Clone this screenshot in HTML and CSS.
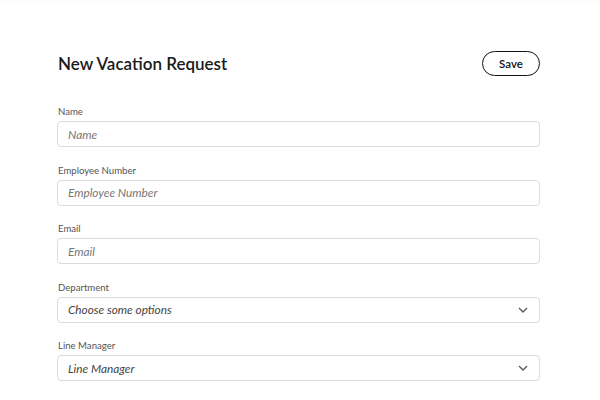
FILE: index.html
```html
<!DOCTYPE html>
<html lang="en">
<head>
<meta charset="utf-8">
<title>New Vacation Request</title>
<link rel="stylesheet" href="styles.css">
</head>
<body>
<div class="topbar"></div>
<main class="page">
  <header class="header">
    <h1 class="title">New Vacation Request</h1>
    <button class="save" type="button">Save</button>
  </header>
  <form class="form">
    <div class="field">
      <label class="label">Name</label>
      <input class="input" type="text" placeholder="Name">
    </div>
    <div class="field">
      <label class="label">Employee Number</label>
      <input class="input" type="text" placeholder="Employee Number">
    </div>
    <div class="field">
      <label class="label">Email</label>
      <input class="input" type="text" placeholder="Email">
    </div>
    <div class="field">
      <label class="label">Department</label>
      <div class="input select">
        <span class="placeholder">Choose some options</span>
        <svg class="chevron" width="10" height="6" viewBox="0 0 10 6"><path d="M1 1l4 4 4-4" fill="none" stroke="#555" stroke-width="1.3"/></svg>
      </div>
    </div>
    <div class="field">
      <label class="label">Line Manager</label>
      <div class="input select">
        <span class="placeholder">Line Manager</span>
        <svg class="chevron" width="10" height="6" viewBox="0 0 10 6"><path d="M1 1l4 4 4-4" fill="none" stroke="#555" stroke-width="1.3"/></svg>
      </div>
    </div>
    <div class="row">
      <div class="field">
        <label class="label">Start date</label>
      </div>
      <div class="field">
        <label class="label">End date</label>
      </div>
    </div>
  </form>
</main>
</body>
</html>
```
FILE: styles.css
```css
* { box-sizing: border-box; }
html, body { margin: 0; padding: 0; background: #fff; }
body {
  font-family: "Lato", "Open Sans", sans-serif;
  color: #222;
  overflow: hidden;
  height: 400px;
}
.topbar {
  height: 0;
  box-shadow: 0 0 5px 1px rgba(0, 0, 0, 0.06);
}
.page {
  padding: 50px 60px 0 57px;
}
.header {
  display: flex;
  justify-content: space-between;
  align-items: center;
  height: 26px;
  margin-bottom: 29px;
}
.title {
  margin: 0 0 0 1px;
  font-size: 17px;
  font-weight: 600;
  color: #1a1a1a;
}
.save {
  width: 58px;
  height: 25px;
  border: 1.5px solid #111;
  border-radius: 13px;
  background: #fff;
  font-family: inherit;
  font-size: 11.5px;
  font-weight: 600;
  color: #111;
  padding: 0;
}
.form { display: flex; flex-direction: column; }
.field { display: flex; flex-direction: column; margin-bottom: 16.5px; }
.label {
  font-size: 9.6px;
  line-height: 14px;
  color: #555;
  margin-bottom: 2px;
  padding-left: 1px;
}
.input {
  height: 26px;
  border: 1px solid #dcdcdc;
  border-radius: 4px;
  padding: 0 10px;
  font-family: inherit;
  font-size: 11.8px;
  font-style: italic;
  color: #333;
  background: #fff;
  outline: none;
}
.input::placeholder { color: #777; font-style: italic; }
.select {
  display: flex;
  align-items: center;
  justify-content: space-between;
  padding-right: 11px;
}
.placeholder { color: #444; }
.chevron { display: block; }
.row {
  display: grid;
  grid-template-columns: 1fr 1fr;
  column-gap: 20px;
}
```
